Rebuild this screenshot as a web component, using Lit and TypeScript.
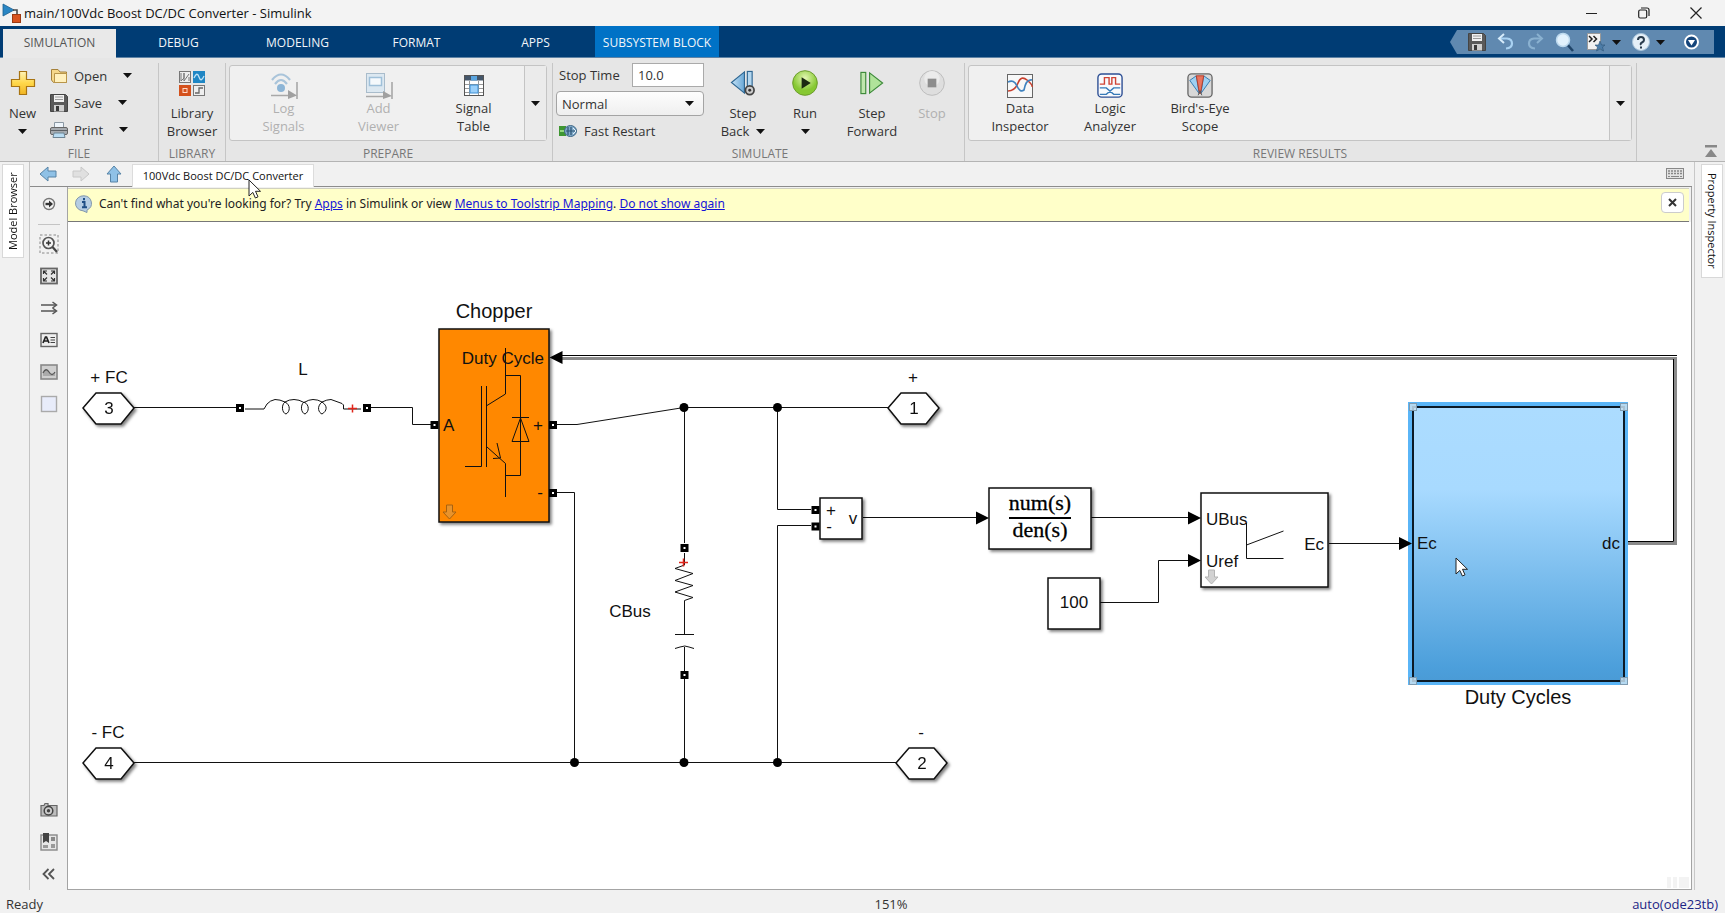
import { LitElement, html, svg, css } from "lit";
import { customElement } from "lit/decorators.js";
import { classMap } from "lit/directives/class-map.js";

const icon = (w: number, h: number, body: unknown) =>
  html`<svg class="ico" width=${w} height=${h} viewBox="0 0 ${w} ${h}" aria-hidden="true">${body}</svg>`;

const caret = () => icon(9, 5, svg`<path d="M0 0H9L4.500 5Z" fill="#111"/>`);

const logo = icon(20, 22, svg`
  <path d="M1 2L12 8L1 14Z" fill="#2a86c4" stroke="#1d5f8f" stroke-width=".8"/>
  <path d="M11 8H15V13" fill="none" stroke="#4a4a4a" stroke-width="1.600"/>
  <rect x="10.500" y="12.500" width="8" height="8" fill="#d9531e" stroke="#9c3a12"/>`);

const plus = icon(26, 26, svg`
  <defs><linearGradient id="gold" x2="0" y2="1"><stop offset="0" stop-color="#fff3b8"/><stop offset=".5" stop-color="#ffd84a"/><stop offset="1" stop-color="#f0b423"/></linearGradient></defs>
  <path d="M9.500 1.500H16.500V9.500H24.500V16.500H16.500V24.500H9.500V16.500H1.500V9.500H9.500Z" fill="url(#gold)" stroke="#a87412" stroke-width="1.200"/>`);

const folder = icon(18, 18, svg`
  <path d="M1.500 2.500H8L10 5H16.500V15.500H3.500L1.500 13Z" fill="#f5d78a" stroke="#a5813a"/>
  <path d="M4.500 6.500H16.500V15.500H4.500Z" fill="#fff0bd" stroke="#b8954a"/>`);

const disk = icon(18, 18, svg`
  <path d="M.5 .5H15.500L17.500 2.500V17.500H.5Z" fill="#5a5a5a" stroke="#444"/>
  <rect x="4" y="1" width="10" height="7" fill="#f1f1f1"/>
  <path d="M5 3H13M5 5.500H13" stroke="#999"/>
  <rect x="4" y="11" width="10" height="6.500" fill="#d0d0d0"/><rect x="6" y="12" width="3" height="5" fill="#3a3a3a"/>`);

const printer = icon(18, 18, svg`
  <path d="M4.500 1.500H13.500V7H4.500Z" fill="#eef5fb" stroke="#8b98a3"/>
  <rect x=".5" y="6.500" width="17" height="7" rx="1.500" fill="#a6abb0" stroke="#666"/>
  <path d="M1 9.500H17" stroke="#5c6166"/>
  <path d="M4 12H14L15 16.500H3Z" fill="#b9dcf2" stroke="#6d8494"/>`);

const library = icon(26, 26, svg`
  <rect x=".5" y="1.500" width="11" height="11" fill="#eee" stroke="#777"/><path d="M2 3V11L5 8V3V11L10 4M10 11V7" fill="none" stroke="#777"/>
  <rect x="14" y="1" width="12" height="12" fill="#1f86c4"/><path d="M15 8Q18 1 20 7T25 6" fill="none" stroke="#bfe2f7" stroke-width="1.300"/>
  <rect x="0" y="15" width="12" height="11" fill="#d4511c"/><rect x="4" y="18.500" width="4" height="4" fill="#d4511c" stroke="#ffd9c7"/>
  <rect x="14.500" y="15.500" width="11" height="10" fill="#eee" stroke="#777"/><path d="M16 23H20V18H24" fill="none" stroke="#666" stroke-width="1.300"/>`);

const logSignals = icon(28, 26, svg`
  <path d="M2 7Q11 -4 20 7M5 11Q11 3 17 11" fill="none" stroke="#a9c4da" stroke-width="2.200"/>
  <circle cx="11" cy="15" r="4" fill="#8db5d6"/>
  <path d="M1 22.500H20M27 9V26" stroke="#a8a8a8" stroke-width="1.600"/><path d="M18 17L27 22.500L18 26Z" fill="#a0a0a0"/>`);

const addViewer = icon(28, 26, svg`
  <rect x="1.500" y=".5" width="18" height="19" fill="#dce8f1" stroke="#a9bccb"/>
  <rect x="4.500" y="4.500" width="12" height="8" fill="#f5f9fc" stroke="#9fc0d9" stroke-width="1.500"/>
  <path d="M1 23.500H20M27 9V26" stroke="#a8a8a8" stroke-width="1.600"/><path d="M18 18L27 23L18 26Z" fill="#a0a0a0"/>`);

const signalTable = icon(20, 26, svg`
  <rect x=".5" y="2.500" width="19" height="20" fill="#fff" stroke="#555"/>
  <rect x="1" y="3" width="18" height="4.500" fill="#44566a"/><path d="M7 3V7.500H13V3Z" fill="#5aa5e0"/>
  <path d="M1 11.500H19M1 15.500H19M1 19.500H19M5.500 8V22M14.500 8V22" stroke="#999"/>
  <rect x="6" y="12" width="8" height="8" fill="#9bd0fa" stroke="#3d8fd4"/>`);

const fastRestart = icon(18, 14, svg`
  <rect x="0" y="2" width="7" height="10" fill="#3f9632"/><path d="M1 7H7" stroke="#93d67e" stroke-width="2"/>
  <ellipse cx="11.500" cy="7" rx="6" ry="5.500" fill="#7fa9c9" stroke="#3f6786"/>
  <path d="M9 3V11M12 3V11M7 7H17" stroke="#2c5474" stroke-width="1.200" fill="none"/><path d="M14 4L17 7L14 10" fill="none" stroke="#e7f2fa"/>`);

const stepBack = icon(28, 27, svg`
  <defs><linearGradient id="sky" x2="1"><stop offset="0" stop-color="#c6e3f7"/><stop offset="1" stop-color="#68a7d6"/></linearGradient></defs>
  <path d="M15.500 2V24L2 13Z" fill="url(#sky)" stroke="#2f6792" stroke-width="1.200"/>
  <rect x="18.500" y="1.500" width="5" height="22" fill="#b4d7f0" stroke="#2f6792" stroke-width="1.200"/>
  <circle cx="21" cy="21" r="4.500" fill="#ccc" stroke="#444" stroke-width="1.800"/><circle cx="21" cy="21" r="1.500" fill="#333"/>`);

const run = icon(28, 27, svg`
  <defs><radialGradient id="lime" cy=".3"><stop offset="0" stop-color="#e4f7b4"/><stop offset="1" stop-color="#86c832"/></radialGradient></defs>
  <circle cx="14" cy="13.500" r="12.800" fill="url(#lime)" stroke="#6a9a2c"/>
  <path d="M10.500 7.500L20 13.500L10.500 19.500Z" fill="#1c2a12"/>`);

const stepForward = icon(26, 27, svg`
  <rect x="1.500" y="2.500" width="5" height="22" fill="#bfe6ad" stroke="#3d8a3a" stroke-width="1.200"/>
  <path d="M10.500 3V24L24 13.500Z" fill="#b0e39a" stroke="#3d8a3a" stroke-width="1.200"/>`);

const stop = icon(28, 27, svg`
  <circle cx="14" cy="13.500" r="12.800" fill="#dedede" stroke="#bbb"/><circle cx="14" cy="9" r="8" fill="#ebebeb"/>
  <rect x="9.500" y="9" width="9" height="9" fill="#8d8d8d"/>`);

const dataInspector = icon(26, 26, svg`
  <rect x=".5" y="1.500" width="25" height="23" fill="#f8f8f8" stroke="#666"/>
  <path d="M1 18Q8 18 11 10T20 7T25 14" fill="none" stroke="#c9402e" stroke-width="1.600"/>
  <path d="M1 9Q7 6 10 13T17 17Q19 6 25 7" fill="none" stroke="#3f82bf" stroke-width="1.600"/>`);

const logicAnalyzer = icon(28, 28, svg`
  <rect x="1" y="1" width="26" height="25" rx="4" fill="#f8fafd" stroke="#2d4f94" stroke-width="1.500"/>
  <path d="M3 12H8V5H13V12H16V5H20V12H25" fill="none" stroke="#cf4436" stroke-width="1.500"/>
  <path d="M3 16H10L18 23H25M3 23H10L18 16H25" fill="none" stroke="#3579b8" stroke-width="1.500"/>`);

const birdsEye = icon(28, 28, svg`
  <rect x="1" y="1" width="26" height="25" rx="4" fill="#d8d8d8" stroke="#666" stroke-width="1.400"/>
  <path d="M10 3L3 8L13 22Z" fill="#9fd0f2" stroke="#2f77ae"/><path d="M18 3L25 8L15 22Z" fill="#9fd0f2" stroke="#2f77ae"/>
  <path d="M10 3H18L14.500 22H13.500Z" fill="#e9745f" stroke="#b53a26"/><path d="M12 24L14 19L16 24" fill="none" stroke="#555"/>`);

const undo = icon(18, 18, svg`<path d="M2 5.500H10Q15 6 15 10.500T9 15.500" fill="none" stroke="#a9d2f2" stroke-width="2.200"/><path d="M7 1L2 5.500L7 10" fill="none" stroke="#d6ebfa" stroke-width="2"/>`);
const redo = icon(18, 18, svg`<path d="M16 5.500H8Q3 6 3 10.500T9 15.500" fill="none" stroke="#8ab1d0" stroke-width="2.200"/><path d="M11 1L16 5.500L11 10" fill="none" stroke="#8ab1d0" stroke-width="2"/>`);
const search = icon(20, 20, svg`<path d="M11 11L18 19" stroke="#1f4468" stroke-width="2.600"/><circle cx="8" cy="8" r="6.500" fill="#e2f2fd" stroke="#bcd9ee" stroke-width="1.500"/>`);
const favorites = icon(20, 20, svg`<path d="M1.500 1.500H14.500V17.500H1.500Z" fill="#f1f1f1" stroke="#999"/><path d="M3 4L6 7L3 10M7.500 4L10.500 7L7.500 10" fill="none" stroke="#222" stroke-width="1.500"/><path d="M14 9L15.500 13H19L16.500 15L17.500 19L14 17L10.500 19L11.500 15L9 13H12.500Z" fill="#4d7da8" stroke="#2e5578" stroke-width=".6"/>`);
const help = icon(18, 20, svg`<circle cx="9" cy="10" r="8.500" fill="#e6f0f8" stroke="#a9c4da"/><path d="M6 8Q6 5 9 5T12 8Q12 9.500 10 10.500T9 13M9 14.500V16.500" fill="none" stroke="#2a3c4d" stroke-width="2"/>`);
const more = icon(15, 16, svg`<circle cx="7.500" cy="8" r="6.500" fill="#15457a" stroke="#fff" stroke-width="2"/><path d="M4 6H11L7.500 11.500Z" fill="#fff"/>`);

const arrowBack = icon(18, 18, svg`<path d="M1 9L9 2V6H17V12H9V16Z" fill="#8fc1e6" stroke="#5683a6"/>`);
const arrowNext = icon(18, 18, svg`<path d="M17 9L9 2V6H1V12H9V16Z" fill="#e0e0e0" stroke="#c8c8c8"/>`);
const arrowUp = icon(18, 18, svg`<path d="M9 1L16 9H12.500V17H5.500V9H2Z" fill="#8fc1e6" stroke="#5683a6"/>`);
const keyboard = icon(18, 12, svg`<rect x=".5" y=".5" width="17" height="10" fill="#e4e4e4" stroke="#888"/><path d="M2 3H16M2 5.500H16" stroke="#888" stroke-width="1.400" stroke-dasharray="2 1"/><path d="M2 8.500H4M5 8.500H13M14 8.500H16" stroke="#888"/>`);
const info = icon(18, 18, svg`<path d="M9 .8A8 7.500 0 0 1 12 15L12 17.500L8 15.800A8 7.500 0 0 1 9 .8Z" fill="#b5cde3" stroke="#8196ab"/><path d="M9 3V5.200M7 7H9.500V12M7 12.200H12" fill="none" stroke="#1f4f86" stroke-width="2"/>`);

const toolOpen = icon(18, 18, svg`<circle cx="9" cy="9" r="5.500" fill="#f4f4f4" stroke="#777" stroke-width="1.400"/><path d="M5.500 9H10" stroke="#333" stroke-width="2.400"/><path d="M9 5.500L13 9L9 12.500Z" fill="#333"/>`);
const toolZoom = icon(20, 20, svg`<rect x="1" y="1" width="18" height="18" fill="none" stroke="#888" stroke-dasharray="2.500 2"/><circle cx="9.500" cy="9" r="5.500" fill="#f3f3f3" stroke="#555" stroke-width="1.700"/><path d="M7 9H12M9.500 6.500V11.500" stroke="#333" stroke-width="1.500"/><path d="M13.500 13L18 18" stroke="#444" stroke-width="2.200"/>`);
const toolFit = icon(18, 18, svg`<rect x="1" y="1.500" width="16" height="15" fill="#e6e6e6" stroke="#666" stroke-width="1.800"/><path d="M7 7.500L3.500 4M3.500 7V4H7M11 7.500L14.500 4M11 4H14.500V7M7 10.500L3.500 14M3.500 11V14H7M11 10.500L14.500 14M14.500 11V14H11" fill="none" stroke="#333" stroke-width="1.200"/>`);
const toolArrows = icon(18, 18, svg`<path d="M1 6H16M1 12H16" stroke="#555" stroke-width="1.300"/><path d="M12.500 3L16.500 6L12.500 9M12.500 9L16.500 12L12.500 15" fill="none" stroke="#555" stroke-width="1.500"/>`);
const toolText = icon(18, 18, svg`<rect x="1" y="2.500" width="16" height="13" fill="#efefef" stroke="#666" stroke-width="1.400"/><path d="M3 12L5.500 6H6.500L9 12M4 10H8" fill="none" stroke="#222" stroke-width="1.700"/><path d="M10.500 6.500H15M10.500 9H15M10.500 11.500H15" stroke="#444"/>`);
const toolImage = icon(18, 18, svg`<rect x="1" y="2" width="16" height="14" fill="#cfcfcf" stroke="#888" stroke-width="1.600"/><path d="M3 10Q6 4 9 9T15 9V13H3Z" fill="#aaa"/><path d="M3 10Q6 4 9 9T15 9" fill="none" stroke="#555" stroke-width="1.300"/>`);
const toolArea = icon(18, 18, svg`<rect x="1.500" y="1.500" width="15" height="15" fill="#e8ecfa" stroke="#aaa" stroke-width="1.400"/>`);
const toolCamera = icon(18, 16, svg`<path d="M1 3.500H4L5 1.500H8V3.500H17V14H1Z" fill="#bdbdbd" stroke="#666" stroke-width="1.200"/><circle cx="8.500" cy="8.700" r="4.300" fill="#ccc" stroke="#444" stroke-width="1.500"/><circle cx="8.500" cy="8.700" r="1.700" fill="#444"/>`);
const toolBook = icon(18, 18, svg`<rect x="1" y="2" width="16" height="15" fill="#e6e6e6" stroke="#888" stroke-width="1.400"/><path d="M3 0H9V10L6 8L3 10Z" fill="#444"/><rect x="11" y="4" width="4" height="4" fill="#888"/><rect x="3" y="12" width="5" height="3" fill="#999"/><rect x="11" y="11" width="4" height="4" fill="#999"/>`);
const toolHide = icon(14, 12, svg`<path d="M6.500 1L1.500 6L6.500 11M12 1L7 6L12 11" fill="none" stroke="#555" stroke-width="1.800"/>`);

const pointer = svg`<path d="M0 0V16L3.800 12.400L6.400 18L9 16.800L6.500 11.300H11.500Z" fill="#fff" stroke="#222"/>`;

/* Diagram parts */
const port = (x: number, y: number, n: string) => svg`
  <path class="block" d="M${x} ${y}L${x + 13} ${y - 15}H${x + 38}L${x + 51} ${y}L${x + 38} ${y + 16}H${x + 13}Z"/>
  <text class="t mid" x=${x + 26} y=${y + 6}>${n}</text>`;
const pin = (x: number, y: number) => svg`<rect x=${x - 2.5} y=${y - 2.5} width="5" height="5" fill="#fff" stroke="#000" stroke-width="3"/>`;
const dot = (x: number, y: number) => svg`<circle cx=${x} cy=${y} r="4.500"/>`;
const head = (x: number, y: number) => svg`<path d="M${x} ${y}L${x - 13} ${y - 6.5}V${y + 6.5}Z"/>`;
const cross = (x: number, y: number) => svg`<path d="M${x - 4.5} ${y}H${x + 4.5}M${x} ${y - 4}V${y + 4}" stroke="#e0261b" stroke-width="1.500"/>`;
const mask = (x: number, y: number, fill: string, line: string) =>
  svg`<path d="M${x - 3} ${y - 7}H${x + 3}V${y}H${x + 6.5}L${x} ${y + 7}L${x - 6.5} ${y}H${x - 3}Z" fill=${fill} stroke=${line}/>`;
const handle = (x: number, y: number) => svg`<rect x=${x - 3.5} y=${y - 3.5} width="7" height="7" fill="#c6dff0" fill-opacity=".85" stroke="#7f9bb0"/>`;

const diagram = svg`
  <defs>
    <linearGradient id="duty" x2="0" y2="1"><stop offset="0" stop-color="#acdcff"/><stop offset=".3" stop-color="#a8daff"/><stop offset=".95" stop-color="#4c9fdb"/><stop offset="1" stop-color="#4a9bd6"/></linearGradient>
    <filter id="shade" x="-20%" y="-20%" width="150%" height="150%"><feDropShadow dx="2" dy="2" stdDeviation="1.500" flood-opacity=".5"/></filter>
  </defs>
  <g transform="translate(-68 -222)">
    <g class="wire">
      <path d="M134 407.500H236M371 407.500H412.500V424.500H431"/>
      <path d="M557 424.500H577L684 407.500H888"/>
      <path d="M557 492.500H574.500V762.500M134 762.500H896"/>
      <path d="M684.500 407V543M684.500 679V762"/>
      <path d="M777.500 407V509.500H811M811 525.500H777.500V762"/>
      <path d="M863 517.500H978M1091 517.500H1189M1100 602.500H1158.500V560.500H1189M1329 543.500H1401"/>
    </g>
    <path d="M561 358.500H1675.500V543.500H1628" fill="none" stroke="#8a8a8a" stroke-width="3"/>
    <path d="M561 355.500H1677M1673.500 359V541.500H1625" fill="none" stroke="#000"/>

    <g filter="url(#shade)">${port(83, 408, "3")}${port(83, 763, "4")}${port(888, 408, "1")}${port(896, 763, "2")}
      <rect class="block chop" x="439" y="329" width="110" height="193"/>
      <rect class="block" x="820" y="498" width="42" height="41"/>
      <rect class="block" x="989" y="488" width="102" height="61"/>
      <rect class="block" x="1048" y="578" width="52" height="51"/>
      <rect class="block" x="1201" y="493" width="127" height="94"/>
    </g>

    <rect x="1408" y="402" width="220" height="283" fill="#5ab5f7"/>
    <rect x="1413" y="407" width="211" height="274" fill="url(#duty)" stroke="#0c1a26" stroke-width="2"/>
    ${handle(1413, 407)}${handle(1624, 407)}${handle(1413, 681)}${handle(1624, 681)}

    <text class="t mid" x="109" y="383">+ FC</text>
    <text class="t mid" x="108" y="738">- FC</text>
    <text class="t mid" x="303" y="375">L</text>
    <text class="t mid" x="913" y="383">+</text>
    <text class="t mid" x="921" y="738">-</text>
    <text class="t mid" x="630" y="617">CBus</text>

    <g class="thin">
      <path d="M245 409H264L267 404Q270 400.500 275 399.500Q280 399.500 285 402Q289 399.500 294 399.500Q299 399.500 304 402.500Q309 399.500 313 399.500Q318 399.500 322 402Q327 399.500 331 399.500L342 403.500L343.500 405V409H361"/>
      <path d="M285 402C281 405 282 413 286 414C290 412 291 405 285 402ZM304 402C300 405 301 413 305 414C309 412 310 405 304 402ZM322 402C316 407 319 413 322 414C327 411 328 406 322 402Z"/>
      <path d="M684.500 553V565L675 568.500L693 573.500L675 580.500L693 585.500L675 592L693 597.500L684.500 600.500V634.500M675 634.500H694M675 648.500L680 647Q685 645 689 647L694 648.500M684.500 647V671"/>
    </g>
    ${cross(352.5, 408.5)}${cross(683.5, 562.5)}

    <text class="title mid" x="494" y="318">Chopper</text>
    <text class="t end" x="544" y="364">Duty Cycle</text>
    <text class="t" x="443" y="431">A</text>
    <text class="t mid" x="538" y="431">+</text>
    <text class="t mid" x="540" y="498">-</text>
    <g class="thin">
      <path d="M505.500 348V394L487 405.500M481.500 386V466.500H465M487 447L505.500 463.500V497M505.500 375.500H520.500V475.500H505.500M512 417.500H529M520.500 418L512 441.500H529Z"/>
      <path d="M486.500 386V467M497 443L500.500 458L493 458.500"/>
    </g>
    ${mask(449.5, 512, "#e8932c", "#a8620f")}

    <text class="t mid" x="831" y="516">+</text>
    <text class="t mid" x="829" y="532">-</text>
    <text class="t mid" x="853" y="524">v</text>

    <text class="tf mid" x="1040" y="510">num(s)</text>
    <path d="M1009 518H1071" stroke="#000" stroke-width="2"/>
    <text class="tf mid" x="1040" y="537">den(s)</text>
    <text class="t mid" x="1074" y="608">100</text>

    <text class="t" x="1206" y="525">UBus</text>
    <text class="t" x="1206" y="567">Uref</text>
    <text class="t end" x="1324" y="550">Ec</text>
    <path class="thin" d="M1246.500 523V558.500H1283.500M1246.500 545L1283.500 531"/>
    ${mask(1211.5, 577, "#d2d2d2", "#b4b4b4")}

    <text class="t" x="1417" y="549">Ec</text>
    <text class="t end" x="1620" y="549">dc</text>
    <text class="title mid" x="1518" y="704">Duty Cycles</text>

    ${pin(240, 408)}${pin(367, 408)}${pin(434.5, 425)}${pin(553, 425)}${pin(553, 493)}
    ${pin(684.5, 548)}${pin(684.5, 675)}${pin(815.5, 510)}${pin(815.5, 526.5)}
    ${dot(684, 407.5)}${dot(777.5, 407.5)}${dot(574.5, 762.5)}${dot(684, 762.5)}${dot(777.5, 762.5)}
    ${head(989, 518)}${head(1201, 518)}${head(1201, 560.5)}${head(1412, 543.5)}
    <path d="M549.500 357.500L562.500 351V364Z"/>
    <path d="M1667 877H1671V888H1667ZM1673 877H1677V888H1673ZM1679 877H1689V888H1679Z" fill="#f3f3f3"/>
    <g transform="translate(1456 558)">${pointer}</g>
  </g>`;

const big = (ico: unknown, a: string, b: unknown, cls = "") =>
  html`<button class="big ${cls}" ?disabled=${cls.includes("off")}>${ico}<span>${a}</span><span class="second">${b}</span></button>`;
const row = (ico: unknown, label: string) => html`<button class="row">${ico}<span>${label}</span>${caret()}</button>`;

@customElement("app-root")
export class AppRoot extends LitElement {
  static styles = css`
    :host { display: flex; flex-direction: column; height: 100vh; min-width: 1200px; overflow: hidden; background: #f1f1f1; color: #333; font: 13px/18px "Open Sans", "Noto Sans", sans-serif; }
    * { box-sizing: border-box; }
    button, input, select { font: inherit; color: inherit; }
    button { background: none; border: 0; padding: 0; margin: 0; }
    .ico { display: block; flex: none; }
    .titlebar { display: flex; align-items: center; height: 26px; flex: none; padding-right: 4px; background: #f3f3f3; color: #111; }
    .titlebar h1 { flex: 1; margin: 0 0 0 2px; font: inherit; }
    .titlebar .ico { margin-left: 2px; }
    .win { display: flex; }
    .win button { width: 52px; display: flex; justify-content: center; }
    .tabbar { display: flex; justify-content: space-between; height: 32px; flex: none; background: #003c74; border-bottom: 1px solid #5f84a6; font-size: 12px; }
    .tabs { display: flex; }
    .tabs button { width: 119px; padding-top: 2px; color: #f2f6fa; }
    .tabs .ctx { width: 124px; background: #0072c6; }
    .tabs .on { width: 113px; margin: 3px 3px -1px 3px; padding: 0 0 2px; background: #e9e9e9; color: #555; }
    .quick { display: flex; align-items: center; gap: 11px; height: 24px; margin: 4px 11px 0 0; padding: 0 15px 0 18px; background: #6089b0; clip-path: polygon(7px 0, 100% 0, 100% 100%, 7px 100%, 0 50%); }
    .quick .pair { display: flex; align-items: center; gap: 6px; }
    .quick .last { margin-left: 8px; }
    .strip { display: flex; height: 104px; flex: none; background: #e6e6e6; border-bottom: 1px solid #b4b4b4; }
    .section { display: flex; flex-direction: column; margin-top: 5px; border-right: 1px solid #c6c6c6; }
    .section > div { display: flex; height: 81px; }
    .section > h2 { margin: 0; font-size: 12px; line-height: 19px; height: 17px; font-weight: 400; text-align: center; color: #777; }
    .file { width: 159px; } .lib { width: 67px; } .prep { width: 327px; padding: 0 5px 0 3px; } .sim { width: 412px; padding-left: 3px; }
    .review { flex: 1; padding: 0 4px 0 3px; }
    .rest { width: 88px; display: flex; justify-content: flex-end; align-items: flex-end; padding: 0 8px 4px 0; }
    .rows { display: flex; flex-direction: column; }
    .row { display: flex; align-items: center; gap: 6px; height: 27px; padding: 0 0 2px 5px; }
    .row .ico:last-child { margin-left: 10px; }
    .big { display: flex; flex-direction: column; align-items: center; padding-top: 7px; }
    .big > .ico { margin-bottom: 8px; height: 26px; }
    .big .second { display: flex; align-items: center; gap: 7px; height: 18px; }
    .off { color: #b0b0b0; }
    .w45 { width: 45px; } .w66 { width: 66px; } .w60 { width: 60px; } .w64 { width: 64px; } .w70 { width: 70px; } .w50 { width: 50px; } .w95 { width: 95px; } .w90 { width: 90px; }
    .section > .gallery { height: 76px; margin: 2px 0 3px; padding-left: 6px; border: 1px solid #c4c4c4; border-radius: 3px; background: #f0f0f0; }
    .gallery .big > .ico { margin-bottom: 0; }
    .gallery .drop { width: 22px; margin-left: auto; display: flex; align-items: center; justify-content: center; background: #ebebeb; border-left: 1px solid #c4c4c4; }
    .fields { display: flex; flex-direction: column; gap: 4px; width: 148px; margin-right: 9px; }
    .stoptime { display: flex; justify-content: space-between; align-items: center; padding-left: 3px; }
    .stoptime input { width: 72px; height: 24px; padding: 0 5px; border: 1px solid #aaa; background: #fff; outline: 0; }
    .pick { display: grid; align-items: center; }
    .pick select, .pick .ico { grid-area: 1 / 1; }
    .pick select { appearance: none; height: 25px; padding: 0 5px; border: 1px solid #a4a4a4; border-radius: 4px; background: linear-gradient(#fdfdfd, #efefef); }
    .pick .ico { justify-self: end; margin-right: 10px; pointer-events: none; }
    .restart { display: flex; align-items: center; gap: 7px; padding-left: 3px; height: 22px; }
    .work { flex: 1; display: flex; min-height: 0; }
    .side { display: flex; flex: none; padding: 2px 0 0 2px; width: 30px; border-right: 1px solid #c4c4c4; align-items: flex-start; }
    .side button { writing-mode: vertical-rl; width: 22px; height: 94px; line-height: 20px; background: #fff; border: 1px solid #d8d8d8; font-size: 11px; color: #111; }
    .side.left button { transform: rotate(180deg); }
    .side.right { width: 31px; padding-left: 6px; border: 0; border-left: 1px solid #c8c8c8; }
    .side.right button { height: 114px; }
    .doc { flex: 1; display: flex; flex-direction: column; min-width: 0; margin-right: 2px; }
    .docbar { display: flex; align-items: center; height: 25px; flex: none; border-bottom: 1px solid #8c8c8c; padding: 0 8px 0 9px; }
    .docbar nav { display: flex; align-items: center; gap: 15px; margin-right: 9px; }
    .doctab { position: relative; height: 23px; width: 182px; align-self: flex-end; margin-bottom: -1px; background: #fff; border: 1px solid #dcdcdc; border-bottom: 0; font-size: 11px; color: #111; }
    .doctab .cursor { position: absolute; left: 115px; top: 14px; width: 14px; height: 20px; }
    .docbar > .ico { margin-left: auto; }
    .editor { flex: 1; display: flex; min-height: 0; }
    .palette { width: 37px; flex: none; display: flex; flex-direction: column; align-items: center; padding-top: 6px; }
    .palette button { height: 32px; width: 26px; display: flex; align-items: center; justify-content: center; flex: none; }
    .palette button:first-child { height: 21px; }
    .palette hr { width: 22px; margin: 10px 0 3px; border: 0; border-top: 1px solid #c4c4c4; }
    .palette .gap { flex: 1; }
    .frame { flex: 1; display: flex; flex-direction: column; min-width: 0; border: 1px solid #a4a4a4; border-top: 0; padding-top: 1px; }
    .notice { display: flex; align-items: center; height: 34px; flex: none; padding: 0 5px 2px 7px; gap: 6px; margin-right: 2px; background: #ffffc9; border-top: 1px solid #d0d0c0; border-bottom: 1px solid #777; color: #222; font-family: "Noto Sans", sans-serif; font-size: 12px; }
    .notice p { margin: 0; flex: 1; }
    .notice a { color: #1414d8; }
    .notice button { width: 23px; height: 21px; margin-bottom: 3px; display: flex; align-items: center; justify-content: center; background: #fff; border: 1px solid #ccc; border-radius: 4px; }
    .canvas { flex: 1; min-height: 0; background: #fff; overflow: hidden; }
    .canvas svg { display: block; width: 100%; height: 100%; }
    .wire { fill: none; stroke: #111; }
    .thin { fill: none; stroke: #111; stroke-width: 1px; }
    .block { fill: #fff; stroke: #111; stroke-width: 1.5px; }
    .chop { fill: #ff8800; }
    .t { font: 17px "Liberation Sans", Arial, sans-serif; fill: #111; }
    .title { font: 20px "Liberation Sans", Arial, sans-serif; fill: #111; }
    .tf { font: 22px "Liberation Serif", "Times New Roman", serif; fill: #000; stroke: #000; stroke-width: .3px; }
    .mid { text-anchor: middle; } .end { text-anchor: end; }
    .status { display: grid; grid-template-columns: 1fr auto 1fr; align-items: center; height: 23px; flex: none; padding: 4px 7px 0 6px; }
    .status a { justify-self: end; color: #1c2484; text-decoration: none; }
    .status .zoom { padding-left: 58px; }
  `;

  private tabs = ["SIMULATION", "DEBUG", "MODELING", "FORMAT", "APPS", "SUBSYSTEM BLOCK"];
  private tools: [string, unknown][] = [
    ["Zoom", toolZoom], ["Fit to view", toolFit], ["Sample time", toolArrows],
    ["Annotation", toolText], ["Image", toolImage], ["Area", toolArea],
  ];

  render() {
    return html`
      <header class="titlebar">
        ${logo}<h1>main/100Vdc Boost DC/DC Converter - Simulink</h1>
        <div class="win">
          <button aria-label="Minimize">${icon(12, 12, svg`<path d="M0 6.500H11" stroke="#222"/>`)}</button>
          <button aria-label="Restore">${icon(12, 12, svg`<rect x=".7" y="3" width="8" height="8" rx="1.500" fill="none" stroke="#222" stroke-width="1.200"/><path d="M3 1H9Q11 1 11 3V9" fill="none" stroke="#222" stroke-width="1.200"/>`)}</button>
          <button aria-label="Close">${icon(12, 12, svg`<path d="M.5 .5L11.500 11.500M11.500 .5L.5 11.500" stroke="#222" stroke-width="1.200"/>`)}</button>
        </div>
      </header>
      <div class="tabbar">
        <nav class="tabs">${this.tabs.map((t, i) => html`<button class=${classMap({ on: i === 0, ctx: i === 5 })}>${t}</button>`)}</nav>
        <div class="quick">
          <button aria-label="Save">${disk}</button><button aria-label="Undo">${undo}</button><button aria-label="Redo">${redo}</button>
          <button aria-label="Search">${search}</button>
          <button class="pair" aria-label="Favorites">${favorites}${caret()}</button>
          <button class="pair" aria-label="Help">${help}${caret()}</button>
          <button class="last" aria-label="More">${more}</button>
        </div>
      </div>
      <div class="strip">
        <section class="section file">
          <div>${big(plus, "New", caret(), "w45")}
            <div class="rows">${row(folder, "Open")}${row(disk, "Save")}${row(printer, "Print")}</div></div>
          <h2>FILE</h2>
        </section>
        <section class="section lib"><div>${big(library, "Library", "Browser", "w66")}</div><h2>LIBRARY</h2></section>
        <section class="section prep">
          <div class="gallery">${big(logSignals, "Log", "Signals", "w95 off")}${big(addViewer, "Add", "Viewer", "w95 off")}${big(signalTable, "Signal", "Table", "w95")}
            <button class="drop" aria-label="More prepare tools">${caret()}</button></div>
          <h2>PREPARE</h2>
        </section>
        <section class="section sim">
          <div>
            <div class="fields">
              <div class="stoptime"><label for="stop">Stop Time</label><input id="stop" .value=${"10.0"} /></div>
              <div class="pick"><select aria-label="Simulation mode"><option>Normal</option></select>${caret()}</div>
              <button class="restart">${fastRestart}<span>Fast Restart</span></button>
            </div>
            ${big(stepBack, "Step", html`Back ${caret()}`, "w60")}${big(run, "Run", caret(), "w64")}${big(stepForward, "Step", "Forward", "w70")}${big(stop, "Stop", "", "w50 off")}
          </div>
          <h2>SIMULATE</h2>
        </section>
        <section class="section review">
          <div class="gallery">${big(dataInspector, "Data", "Inspector", "w90")}${big(logicAnalyzer, "Logic", "Analyzer", "w90")}${big(birdsEye, "Bird's-Eye", "Scope", "w90")}
            <button class="drop" aria-label="More review tools">${caret()}</button></div>
          <h2>REVIEW RESULTS</h2>
        </section>
        <div class="rest"><button aria-label="Collapse toolstrip">${icon(12, 12, svg`<rect width="12" height="2.500" fill="#888"/><path d="M6 4L12 12H0Z" fill="#888"/>`)}</button></div>
      </div>
      <div class="work">
        <aside class="side left"><button>Model Browser</button></aside>
        <main class="doc">
          <div class="docbar">
            <nav><button aria-label="Back">${arrowBack}</button><button aria-label="Forward">${arrowNext}</button><button aria-label="Up">${arrowUp}</button></nav>
            <button class="doctab">100Vdc Boost DC/DC Converter<svg class="cursor" viewBox="-1 -1 14 20">${pointer}</svg></button>
            ${keyboard}
          </div>
          <div class="editor">
            <div class="palette">
              <button aria-label="Show palette">${toolOpen}</button><hr />
              ${this.tools.map(([n, i]) => html`<button aria-label=${n}>${i}</button>`)}
              <div class="gap"></div>
              <button aria-label="Screenshot">${toolCamera}</button><button aria-label="Viewmarks">${toolBook}</button><button aria-label="Hide">${toolHide}</button>
            </div>
            <div class="frame">
              <div class="notice">${info}
                <p>Can't find what you're looking for? Try <a href="#apps">Apps</a> in Simulink or view <a href="#menus">Menus to Toolstrip Mapping</a>. <a href="#hide">Do not show again</a></p>
                <button aria-label="Close message">${icon(9, 9, svg`<path d="M1 1L8 8M8 1L1 8" stroke="#333" stroke-width="2"/>`)}</button>
              </div>
              <div class="canvas"><svg role="img" aria-label="Boost converter block diagram">${diagram}</svg></div>
            </div>
          </div>
        </main>
        <aside class="side right"><button>Property Inspector</button></aside>
      </div>
      <footer class="status"><span>Ready</span><span class="zoom">151%</span><a href="#solver">auto(ode23tb)</a></footer>
    `;
  }
}
